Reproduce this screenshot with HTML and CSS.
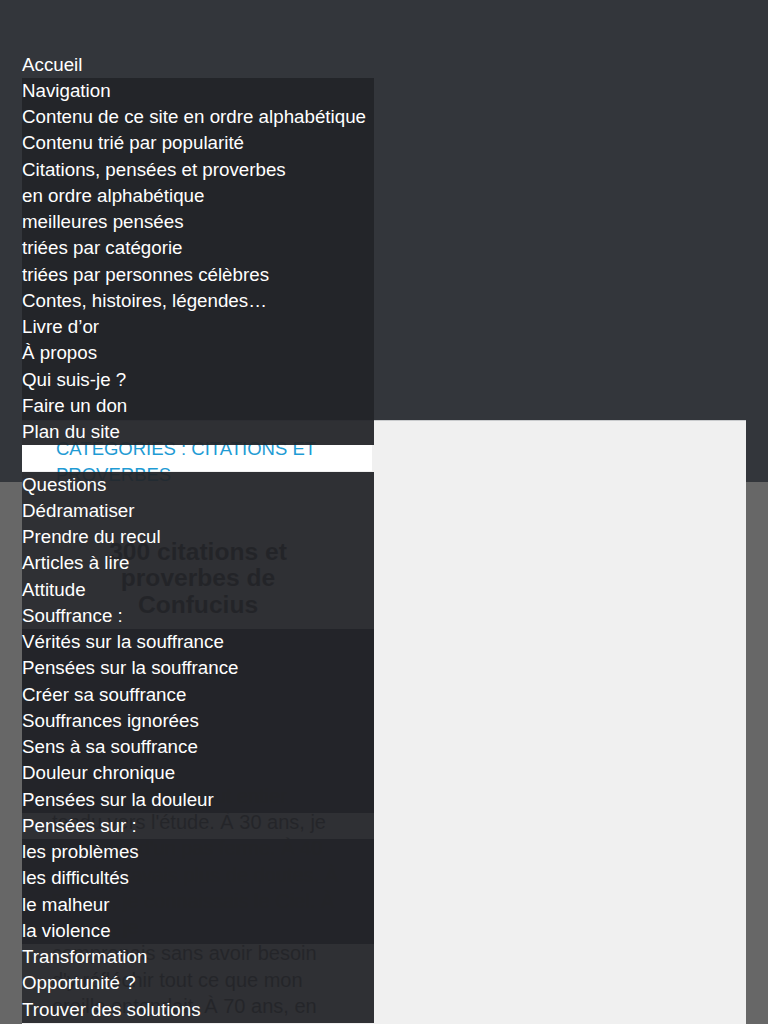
FILE: index.html
```html
<!DOCTYPE html>
<html lang="fr">
<head>
  <meta charset="UTF-8" />
  <meta name="viewport" content="width=device-width, initial-scale=1.0"/>
  <title>300 citations et proverbes de Confucius</title>
  <link rel="stylesheet" href="styles.css">
</head>
<body>
  <header class="site-header"></header>

  <main class="panel">
    <div class="crumb">
      <h2>Catégories : Citations et proverbes</h2>
    </div>
    <h1 class="post-title">300 citations et<br>proverbes de<br>Confucius</h1>
    <p class="post-text">
      À 15 ans, j'étais tout entier<br>
      tendu vers l'étude. À 30 ans, je<br>
      marchais d'un pas ferme. À 40<br>
      ans, je n'avais plus de doutes. À<br>
      50 ans, je connaissais le Ciel. À<br>
      60 ans, je<br>
      comprenais sans avoir besoin<br>
      d'y réfléchir tout ce que mon<br>
      oreille entendait. À 70 ans, en
    </p>
  </main>

  <!-- menu deroule par-dessus le contenu -->
  <nav class="menu">
    <ul>
      <li><a href="#">Accueil</a></li>
    </ul>
    <ul class="sub">
      <li><a href="#">Navigation</a></li>
      <li><a href="#">Contenu de ce site en ordre alphabétique</a></li>
      <li><a href="#">Contenu trié par popularité</a></li>
      <li><a href="#">Citations, pensées et proverbes</a></li>
      <li><a href="#">en ordre alphabétique</a></li>
      <li><a href="#">meilleures pensées</a></li>
      <li><a href="#">triées par catégorie</a></li>
      <li><a href="#">triées par personnes célèbres</a></li>
      <li><a href="#">Contes, histoires, légendes…</a></li>
      <li><a href="#">Livre d’or</a></li>
      <li><a href="#">À propos</a></li>
      <li><a href="#">Qui suis-je ?</a></li>
      <li><a href="#">Faire un don</a></li>
      <li><a href="#">Plan du site</a></li>
    </ul>
    <div class="menu-gap"></div>
    <ul class="sub">
      <li><a href="#">Questions</a></li>
      <li><a href="#">Dédramatiser</a></li>
      <li><a href="#">Prendre du recul</a></li>
      <li><a href="#">Articles à lire</a></li>
      <li><a href="#">Attitude</a></li>
      <li>
        <a href="#">Souffrance :</a>
        <ul class="sub">
          <li><a href="#">Vérités sur la souffrance</a></li>
          <li><a href="#">Pensées sur la souffrance</a></li>
          <li><a href="#">Créer sa souffrance</a></li>
          <li><a href="#">Souffrances ignorées</a></li>
          <li><a href="#">Sens à sa souffrance</a></li>
          <li><a href="#">Douleur chronique</a></li>
          <li><a href="#">Pensées sur la douleur</a></li>
        </ul>
      </li>
      <li>
        <a href="#">Pensées sur :</a>
        <ul class="sub">
          <li><a href="#">les problèmes</a></li>
          <li><a href="#">les difficultés</a></li>
          <li><a href="#">le malheur</a></li>
          <li><a href="#">la violence</a></li>
        </ul>
      </li>
      <li><a href="#">Transformation</a></li>
      <li><a href="#">Opportunité ?</a></li>
      <li><a href="#">Trouver des solutions</a></li>
    </ul>
  </nav>
</body>
</html>
```

FILE: styles.css
```css
body {
  margin: 0;
  background: #676767;
  font-family: "Liberation Sans", Arial, sans-serif;
  overflow: hidden;
  height: 1024px;
}
.site-header {
  height: 482px;
  background: #33363b;
}
.panel {
  margin: -62px 22px 0;
  height: 603px;
  background: #f0f0f0;
  border-top: 1px solid #c9cbcd;
}
.crumb {
  width: 350px;
  height: 26px;
  margin-top: 24px;
  background: #fff;
}
.crumb h2 {
  margin: 0;
  padding: 0 0 0 34px;
  position: relative;
  top: -9px;
  font-size: 18.5px;
  font-weight: normal;
  line-height: 26px;
  text-transform: uppercase;
  color: #1f9bd4;
}
.post-title {
  width: 352px;
  margin: 68px 0 0;
  font-size: 24.6px;
  line-height: 26.25px;
  text-align: center;
  color: #333;
}
.post-text {
  width: 310px;
  margin: 165px 0 0 30px;
  font-size: 20px;
  line-height: 26.25px;
  color: #444;
  white-space: nowrap;
}

/* menu */
.menu {
  position: absolute;
  top: 51.5px;
  left: 22px;
  width: 352px;
  font-size: 18.75px;
  line-height: 26.25px;
}
.menu ul {
  list-style: none;
  margin: 0;
  padding: 0;
}
.menu .sub {
  background: rgba(35, 36, 40, 0.944);
}
.menu a {
  display: block;
  color: #fff;
  text-decoration: none;
  white-space: nowrap;
}
.menu-gap {
  height: 26.25px;
}
```
